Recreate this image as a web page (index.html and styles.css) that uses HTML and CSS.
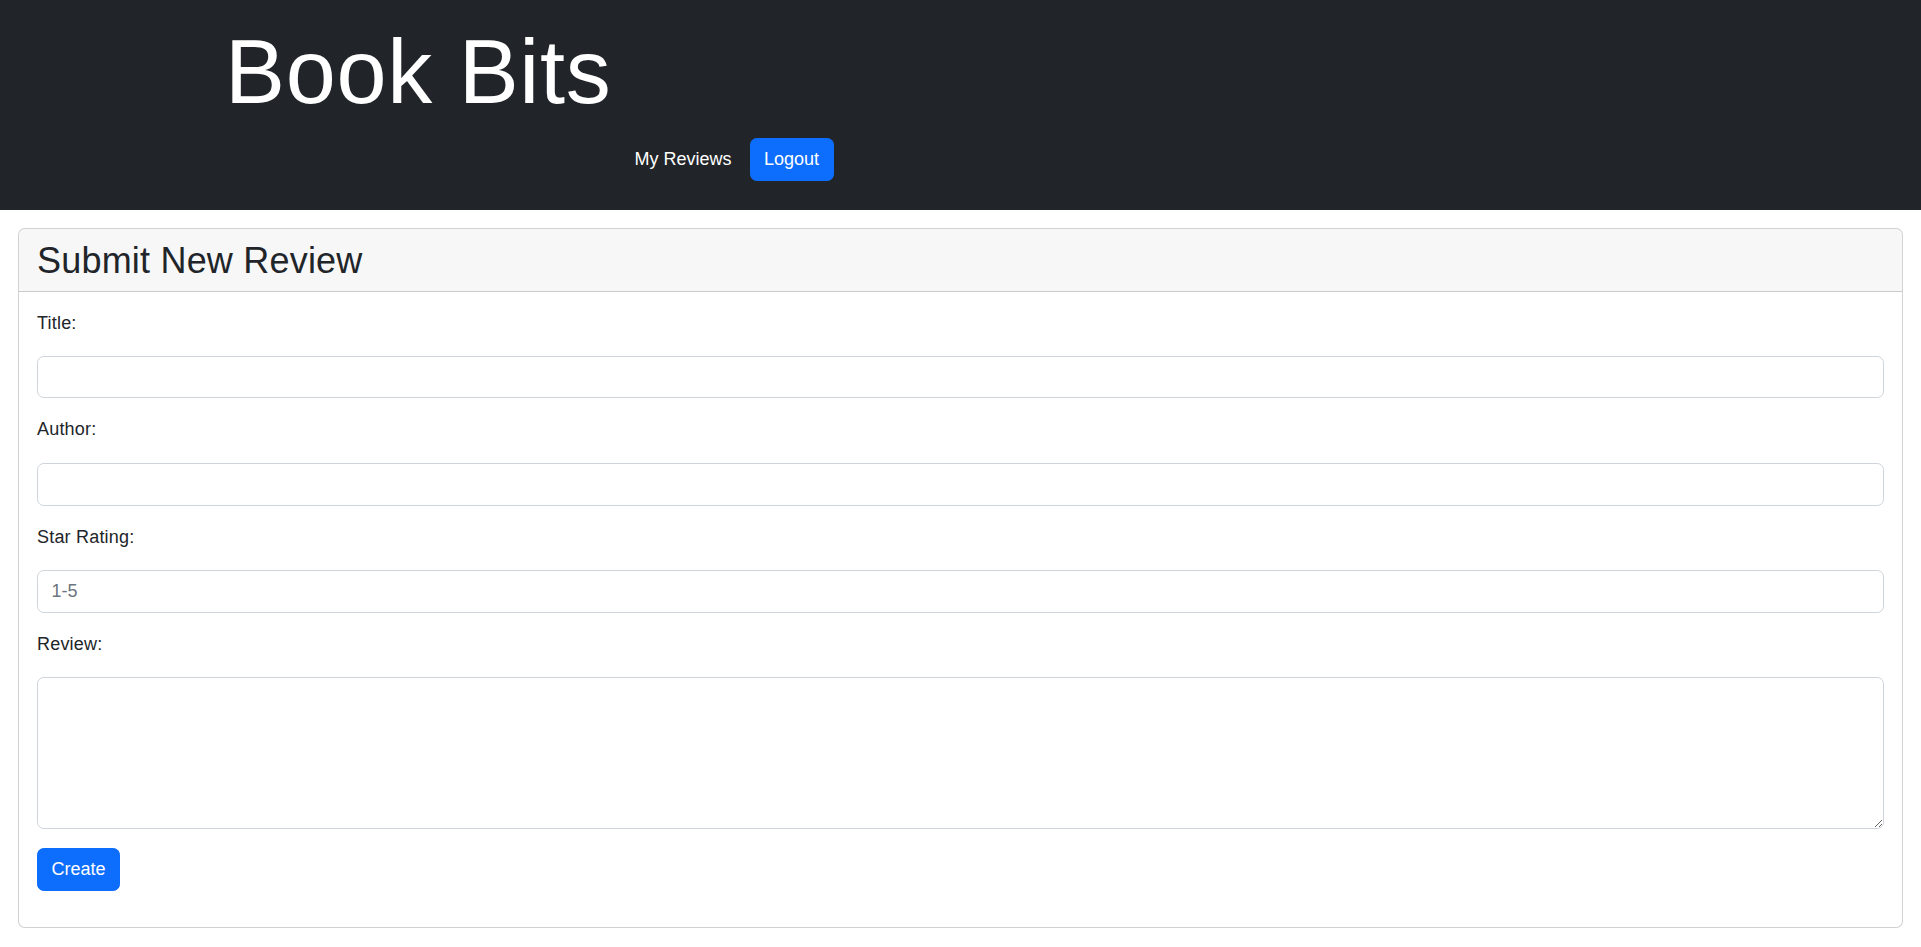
FILE: index.html
```html
<!DOCTYPE html>
<html lang="en">
<head>
<meta charset="utf-8">
<title>Book Bits</title>
<link rel="stylesheet" href="styles.css">
</head>
<body>
<header class="site-header">
  <h1 class="brand">Book Bits</h1>
  <nav class="site-nav">
    <a class="nav-link" href="#">My Reviews</a>
    <a class="btn btn-primary" href="#">Logout</a>
  </nav>
</header>
<main class="card">
  <div class="card-header">
    <h2 class="card-title">Submit New Review</h2>
  </div>
  <div class="card-body">
    <form class="review-form">
      <label class="form-label" for="title">Title:</label>
      <input class="form-control" id="title" type="text">
      <label class="form-label" for="author">Author:</label>
      <input class="form-control" id="author" type="text">
      <label class="form-label" for="rating">Star Rating:</label>
      <input class="form-control" id="rating" type="text" placeholder="1-5">
      <label class="form-label" for="review">Review:</label>
      <textarea class="form-control form-textarea" id="review"></textarea>
      <button class="btn btn-primary btn-submit" type="button">Create</button>
    </form>
  </div>
</main>
</body>
</html>
```

FILE: styles.css
```css
html, body {
  margin: 0;
  padding: 0;
}
body {
  font-family: "Liberation Sans", Arial, sans-serif;
  font-size: 18px;
  line-height: 27px;
  letter-spacing: 0.2px;
  color: #212529;
  background: #ffffff;
}
.site-header {
  background: #212529;
  height: 210px;
  box-sizing: border-box;
  padding: 18px 0 0 225px;
  display: flex;
  align-items: flex-start;
}
.brand {
  margin: 0;
  font-size: 90px;
  line-height: 108px;
  font-weight: 400;
  letter-spacing: 0.7px;
  color: #ffffff;
}
.site-nav {
  display: flex;
  align-items: center;
  margin-top: 119px;
  margin-left: 5px;
}
.nav-link {
  color: #ffffff;
  text-decoration: none;
  padding: 9px 18px;
  font-size: 18px;
  line-height: 27px;
  letter-spacing: 0;
}
.btn {
  display: inline-block;
  font-family: inherit;
  font-size: 18px;
  line-height: 27px;
  letter-spacing: 0;
  padding: 6.75px 13.5px;
  border-radius: 6.75px;
  border: 1px solid transparent;
  text-decoration: none;
  cursor: pointer;
  box-sizing: border-box;
}
.btn-primary {
  background: #0d6efd;
  border-color: #0d6efd;
  color: #ffffff;
}
.card {
  display: block;
  margin: 18px;
  border: 1px solid rgba(0, 0, 0, 0.175);
  border-radius: 6.75px;
  background: #ffffff;
  overflow: hidden;
}
.card-header {
  padding: 9.5px 18px;
  background: rgba(0, 0, 0, 0.03);
  border-bottom: 1px solid rgba(0, 0, 0, 0.175);
}
.card-title {
  margin: 0;
  font-size: 36px;
  line-height: 43.2px;
  font-weight: 400;
  letter-spacing: 0.2px;
  color: #212529;
}
.card-body {
  padding: 18px;
}
.review-form {
  display: flex;
  flex-direction: column;
  align-items: flex-start;
}
.form-label {
  display: block;
  margin-bottom: 19.5px;
}
.form-label:first-child {
  margin-bottom: 18.5px;
}
.form-control {
  display: block;
  width: 100%;
  box-sizing: border-box;
  height: 42.75px;
  margin: 0 0 18px 0;
  padding: 6.75px 13.5px;
  font-family: inherit;
  font-size: 18px;
  line-height: 27px;
  color: #212529;
  background: #ffffff;
  border: 1px solid #ced4da;
  border-radius: 6.75px;
  outline: none;
}
.form-control::placeholder {
  color: #6c757d;
  opacity: 1;
}
.form-textarea {
  height: 152px;
  resize: vertical;
  margin-bottom: 19px;
}
.btn-submit {
  margin-bottom: 18.5px;
}
```
